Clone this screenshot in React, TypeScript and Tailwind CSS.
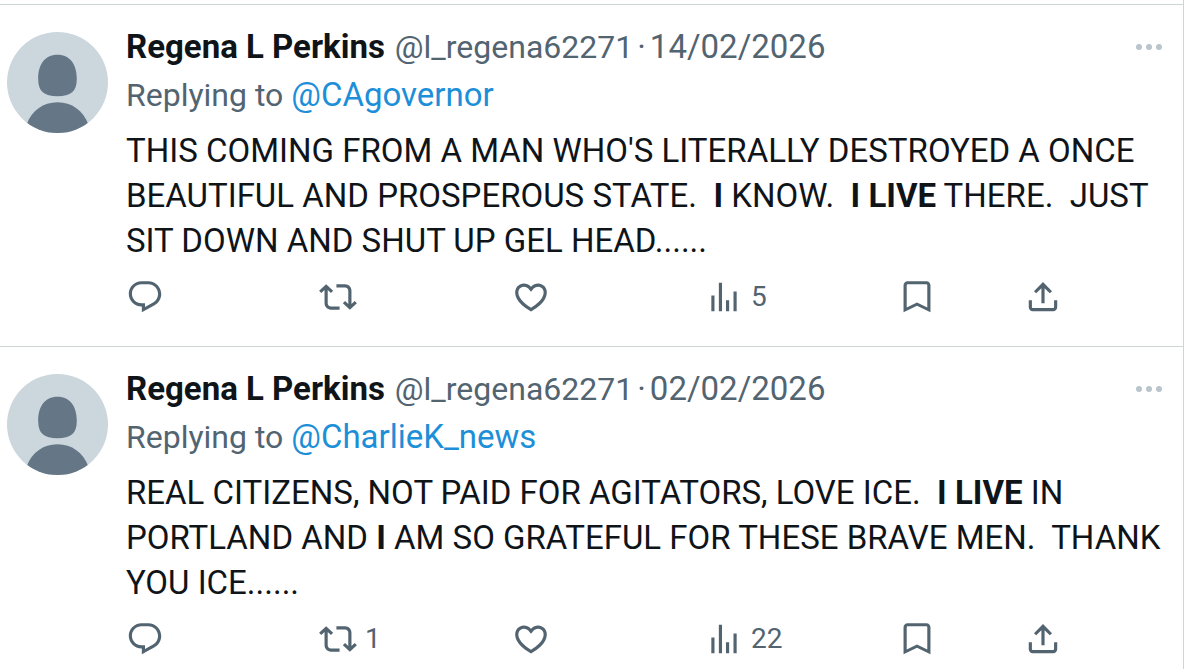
import React from 'react'

type Post = {
  id: number
  date: string
  replyingTo: string
  text: React.ReactNode
  reposts?: number
  views: number
}

const posts: Post[] = [
  {
    id: 1,
    date: '14/02/2026',
    replyingTo: '@CAgovernor',
    text: (
      <>
        {"THIS COMING FROM A MAN WHO'S LITERALLY DESTROYED A ONCE\n"}
        {'BEAUTIFUL AND PROSPEROUS STATE.  '}<b>I</b>{' KNOW.  '}<b>I LIVE</b>{' THERE.  JUST\n'}
        {'SIT DOWN AND SHUT UP GEL HEAD......'}
      </>
    ),
    views: 5,
  },
  {
    id: 2,
    date: '02/02/2026',
    replyingTo: '@CharlieK_news',
    text: (
      <>
        {'REAL CITIZENS, NOT PAID FOR AGITATORS, LOVE ICE.  '}<b>I LIVE</b>{' IN\n'}
        {'PORTLAND AND '}<b>I</b>{' AM SO GRATEFUL FOR THESE BRAVE MEN.  THANK\n'}
        {'YOU ICE......'}
      </>
    ),
    reposts: 1,
    views: 22,
  },
]

const icons = {
  reply:
    'M1.751 10c0-4.42 3.584-8 8.005-8h4.366c4.49 0 8.129 3.64 8.129 8.13 0 2.96-1.607 5.68-4.196 7.11l-8.054 4.46v-3.69h-.067c-4.49.1-8.183-3.51-8.183-8.01zm8.005-6c-3.317 0-6.005 2.69-6.005 6 0 3.37 2.77 6.08 6.138 6.01l.351-.01h1.761v2.3l5.087-2.81c1.951-1.08 3.163-3.13 3.163-5.36 0-3.39-2.744-6.13-6.129-6.13H9.756z',
  repost:
    'M4.5 3.88l4.432 4.14-1.364 1.46L5.5 7.55V16c0 1.1.896 2 2 2H13v2H7.5c-2.209 0-4-1.79-4-4V7.55L1.432 9.48.068 8.02 4.5 3.88zM16.5 6H11V4h5.5c2.209 0 4 1.79 4 4v8.45l2.068-1.93 1.364 1.46-4.432 4.14-4.432-4.14 1.364-1.46 2.068 1.93V8c0-1.1-.896-2-2-2z',
  like:
    'M16.697 5.5c-1.222-.06-2.679.51-3.89 2.16l-.805 1.09-.806-1.09C9.984 6.01 8.526 5.44 7.304 5.5c-1.243.07-2.349.78-2.91 1.91-.552 1.12-.633 2.78.479 4.82 1.074 1.97 3.257 4.27 7.129 6.61 3.87-2.34 6.052-4.64 7.126-6.61 1.111-2.04 1.03-3.7.477-4.82-.561-1.13-1.666-1.84-2.908-1.91zm4.187 7.69c-1.351 2.48-4.001 5.12-8.379 7.67l-.503.3-.504-.3c-4.379-2.55-7.029-5.19-8.382-7.67-1.36-2.5-1.41-4.86-.514-6.67.887-1.79 2.647-2.91 4.601-3.01 1.651-.09 3.368.56 4.798 2.01 1.429-1.45 3.146-2.1 4.796-2.01 1.954.1 3.714 1.22 4.601 3.01.896 1.81.846 4.17-.514 6.67z',
  views: 'M8.75 21V3h2v18h-2zM18 21V8.5h2V21h-2zM4 21l.004-10h2L6 21H4zm9.248 0v-7h2v7h-2z',
  bookmark:
    'M3.5 4.5C3.5 3.12 4.62 2 6 2h12c1.38 0 2.5 1.12 2.5 2.5v17.2L12 17.6l-8.5 4.1V4.5zM6 4c-.28 0-.5.22-.5.5v14.1l6.5-3.2 6.5 3.2V4.5c0-.28-.22-.5-.5-.5H6z',
  share:
    'M12 2.59l5.7 5.7-1.41 1.42L13 6.41V16h-2V6.41l-3.3 3.3-1.41-1.42L12 2.59zM21 14l-.02 4.51c0 1.38-1.12 2.49-2.5 2.49H5.5C4.11 21 3 19.88 3 18.5V14h2v4.5c0 .28.22.5.5.5h12.98c.28 0 .5-.22.5-.5L19 14h2z',
}

function Action({ icon, label, count }: { icon: keyof typeof icons; label: string; count?: number }) {
  return (
    <button aria-label={label} className="flex items-center gap-2 text-[28px] leading-9">
      <svg viewBox="0 0 24 24" className="size-[38px] shrink-0 fill-current" aria-hidden="true">
        <path d={icons[icon]} />
      </svg>
      {count !== undefined && <span>{count}</span>}
    </button>
  )
}

function Avatar() {
  return (
    <svg viewBox="0 0 102 102" className="size-[101px] shrink-0 rounded-full bg-[#cbd6dd]" aria-hidden="true">
      <path
        d="M51 23c13 0 19.500 10 19.500 24.500 0 12.500-6 17.500-19.500 17.500s-19.500-5-19.500-17.500C31.500 33 38 23 51 23zM51 71c14.500 0 26 8.500 31 22v9H20v-9c5-13.500 16.500-22 31-22z"
        fill="#657786"
      />
    </svg>
  )
}

function PostCard({ post }: { post: Post }) {
  return (
    <article className="flex gap-[18px] border-t border-[#cfd4d7] pt-[27px] pr-[21px] pb-[30px] pl-[7px]">
      <Avatar />
      <div className="min-w-0 flex-1">
        <header className="flex h-[30px] items-center justify-between text-[33px]">
          <div className="flex items-baseline whitespace-pre">
            <span className="font-bold text-[#0f1419]">Regena L Perkins</span>
            <span className="ml-2.5 text-[32px]">@l_regena62271</span>
            <span className="mx-1">·</span>
            <time>{post.date}</time>
          </div>
          <button aria-label="More" className="flex gap-1">
            <span className="size-[6px] rounded-full bg-[#b9c5cc]" />
            <span className="size-[6px] rounded-full bg-[#b9c5cc]" />
            <span className="size-[6px] rounded-full bg-[#b9c5cc]" />
          </button>
        </header>
        <p className="mt-[13px] text-[32px] leading-10">
          Replying to <a href="#" className="text-[33px] text-[#1d8fd8]">{post.replyingTo}</a>
        </p>
        <p className="mt-[13px] text-[33px] leading-[45px] whitespace-pre text-[#0f1419]">{post.text}</p>
        <div className="mt-[15px] flex items-center pr-[100px]">
          <div className="flex-1"><Action icon="reply" label="Reply" /></div>
          <div className="flex-1"><Action icon="repost" label="Repost" count={post.reposts} /></div>
          <div className="flex-1"><Action icon="like" label="Like" /></div>
          <div className="flex-1"><Action icon="views" label="Views" count={post.views} /></div>
          <div className="flex gap-[88px]">
            <Action icon="bookmark" label="Bookmark" />
            <Action icon="share" label="Share" />
          </div>
        </div>
      </div>
    </article>
  )
}

export default function App(): React.ReactElement {
  return (
    <div className="h-screen overflow-hidden bg-white pr-[15px] font-[Roboto,sans-serif] text-[#536471]">
      <main className="min-h-full border-r border-[#cfd4d7] pt-1">
        {posts.map((post) => (
          <PostCard key={post.id} post={post} />
        ))}
      </main>
    </div>
  )
}
